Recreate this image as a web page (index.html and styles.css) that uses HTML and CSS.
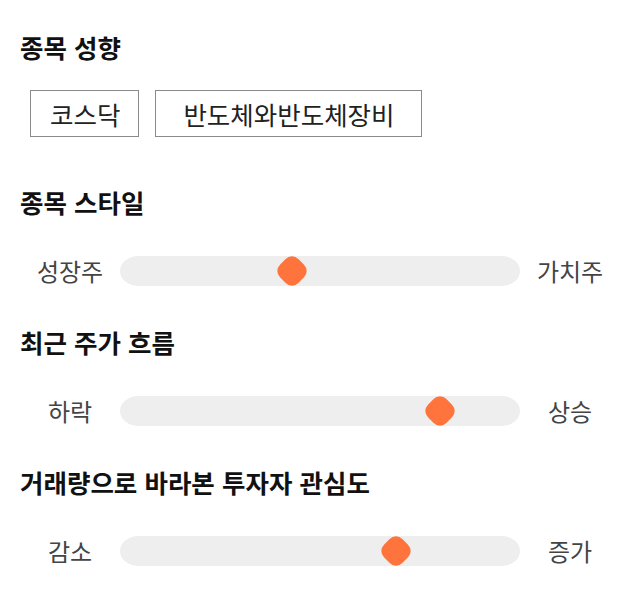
FILE: index.html
```html
<!DOCTYPE html>
<html lang="ko">
<head>
<meta charset="utf-8">
<link rel="stylesheet" href="styles.css">
</head>
<body>
<main class="page">
  <section class="section section-tags">
    <h2 class="title">종목 성향</h2>
    <div class="tags">
      <span class="tag tag-short">코스닥</span>
      <span class="tag tag-long">반도체와반도체장비</span>
    </div>
  </section>
  <section class="section">
    <h2 class="title">종목 스타일</h2>
    <div class="slider-row">
      <span class="label">성장주</span>
      <div class="track"><span class="thumb" style="left: 43%"></span></div>
      <span class="label">가치주</span>
    </div>
  </section>
  <section class="section">
    <h2 class="title">최근 주가 흐름</h2>
    <div class="slider-row">
      <span class="label">하락</span>
      <div class="track"><span class="thumb" style="left: 80%"></span></div>
      <span class="label">상승</span>
    </div>
  </section>
  <section class="section">
    <h2 class="title">거래량으로 바라본 투자자 관심도</h2>
    <div class="slider-row">
      <span class="label">감소</span>
      <div class="track"><span class="thumb" style="left: 69%"></span></div>
      <span class="label">증가</span>
    </div>
  </section>
</main>
</body>
</html>
```
FILE: styles.css
```css
* { box-sizing: border-box; }
html, body { margin: 0; padding: 0; background: #fff; }
body {
  font-family: "Noto Sans CJK KR", "Noto Sans", sans-serif;
  color: #111;
}
.page {
  padding: 29px 20px 0;
  display: flex;
  flex-direction: column;
}
.section {
  display: flex;
  flex-direction: column;
  gap: 36px;
  margin-bottom: 38px;
}
.section-tags {
  gap: 25px;
  margin-bottom: 47px;
}
.title {
  margin: 0;
  font-size: 25.5px;
  line-height: 36px;
  font-weight: 700;
  color: #111;
}
.tags {
  display: flex;
  gap: 16px;
  padding-left: 10px;
}
.tag {
  height: 47px;
  display: flex;
  align-items: center;
  border: 1px solid #8a8a8a;
  font-size: 25.5px;
  color: #222;
}
.tag-short { padding: 0 18px 0 19px; }
.tag-long { padding: 0 26px 0 27px; }
.slider-row {
  display: grid;
  grid-template-columns: 100px 1fr 100px;
  align-items: center;
  height: 30px;
}
.label {
  text-align: center;
  font-size: 24px;
  line-height: 30px;
  color: #444;
}
.track {
  position: relative;
  height: 30px;
  background: #eeeeee;
  border-radius: 18px / 15px;
}
.thumb {
  position: absolute;
  top: 2px;
  width: 26px;
  height: 26px;
  margin-left: -13px;
  background: #ff743c;
  border-radius: 9px;
  transform: rotate(45deg);
}
```
